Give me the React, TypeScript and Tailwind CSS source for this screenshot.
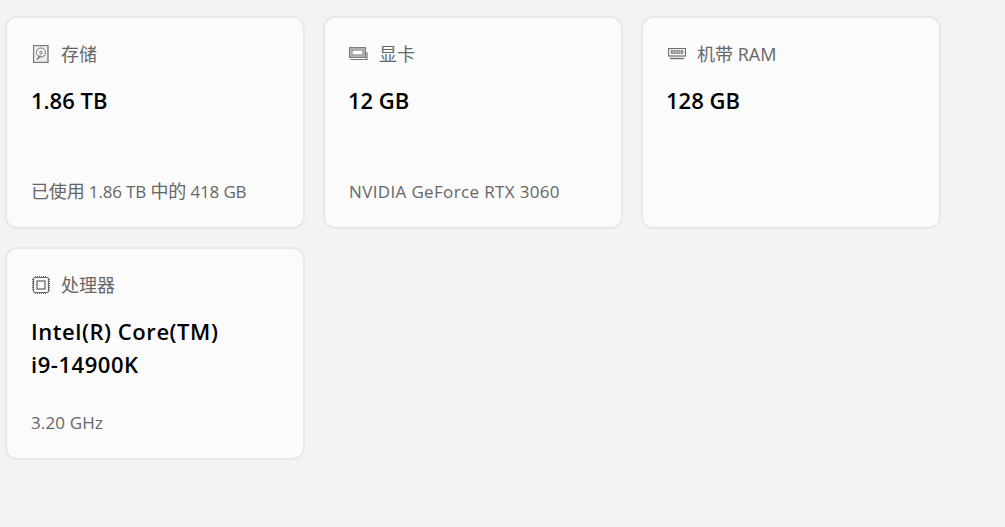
import type { ReactNode } from 'react';

const font = { fontFamily: '"Open Sans", "Noto Sans CJK SC", sans-serif' };

function DiskIcon() {
  return (
    <svg width="16" height="18" viewBox="0 0 16 18" fill="none" stroke="#777" strokeWidth="1">
      <rect x="0.5" y="0.5" width="14.5" height="17" fill="#ececec" strokeWidth="1.3" />
      <circle cx="8" cy="7.5" r="4.5" fill="#f8f8f8" />
      <circle cx="8" cy="7.5" r="1.3" />
      <path d="M7.5 10.5l-3.5 4" strokeWidth="1.5" />
    </svg>
  );
}

function GpuIcon() {
  return (
    <svg width="19" height="14" viewBox="0 0 19 14" fill="none" stroke="#777" strokeWidth="1">
      <rect x="0.7" y="0.7" width="15.6" height="9.6" fill="#d6d6d6" strokeWidth="1.3" />
      <rect x="3" y="3" width="11" height="5" fill="#fbfbfb" />
      <path d="M1.5 12.5h16.5V5" strokeWidth="1.2" />
    </svg>
  );
}

function RamIcon() {
  return (
    <svg width="18" height="12" viewBox="0 0 18 12" fill="none" stroke="#6f6f6f" strokeWidth="1">
      <rect x="0.5" y="0.5" width="17" height="7.5" strokeWidth="1.2" />
      <rect x="3" y="2.5" width="12" height="3" fill="#aaa" strokeDasharray="1.5 1" />
      <path d="M2 10.5h14" strokeWidth="1.4" />
    </svg>
  );
}

function CpuIcon() {
  return (
    <svg width="18" height="18" viewBox="0 0 18 18" fill="none" stroke="#6a6a6a" strokeWidth="1">
      <rect x="1.5" y="1.5" width="15" height="15" rx="1.5" strokeWidth="1.2" />
      <rect x="5" y="5" width="8" height="8" strokeWidth="1.3" />
      <path d="M0.5 3v12M17.5 3v12M3 0.5h12M3 17.5h12" strokeDasharray="1 1" />
    </svg>
  );
}

interface CardProps {
  icon: ReactNode;
  label: string;
  value: ReactNode;
  detail?: ReactNode;
}

function Card({ icon, label, value, detail }: CardProps) {
  return (
    <div className="flex h-[213px] flex-col rounded-[12px] border-2 border-[#e8e8e8] bg-[#fbfbfb] pl-[24px] pr-4">
      <div className="mt-[24px] flex h-[24px] items-center gap-[11px] text-[18px] text-[#666666]">
        <span className="flex w-[19px] shrink-0 items-center justify-center">{icon}</span>
        <span>{label}</span>
      </div>
      <div className="mt-[18px] text-[22px] leading-[33px] font-semibold text-black">{value}</div>
      {detail && <div className="mt-auto mb-[23px] text-[17px] leading-[24px] text-[#666666]">{detail}</div>}
    </div>
  );
}

export default function App() {
  return (
    <div style={font} className="h-[527px] w-[1005px] overflow-hidden bg-[#f3f3f3] pt-[16px] pl-[5px]">
      <div className="grid w-[936px] grid-cols-[300px_300px_300px] gap-x-[18px] gap-y-[18px]">
        <Card
          icon={<DiskIcon />}
          label="存储"
          value="1.86 TB"
          detail={
            <span className="tracking-[-0.15px]">
              <span className="text-[18px]">已使用</span> 1.86 TB <span className="text-[18px]">中的</span> 418 GB
            </span>
          }
        />
        <Card
          icon={<GpuIcon />}
          label="显卡"
          value={<span className="-ml-px">12 GB</span>}
          detail={<span className="tracking-[0.35px]">NVIDIA GeForce RTX 3060</span>}
        />
        <Card icon={<RamIcon />} label="机带 RAM" value={<span className="-ml-px">128 GB</span>} />
        <Card
          icon={<CpuIcon />}
          label="处理器"
          value={
            <span className="tracking-[0.55px]">
              Intel(R) Core(TM)
              <br />
              i9-14900K
            </span>
          }
          detail={<span className="tracking-[0.15px]">3.20 GHz</span>}
        />
      </div>
    </div>
  );
}
